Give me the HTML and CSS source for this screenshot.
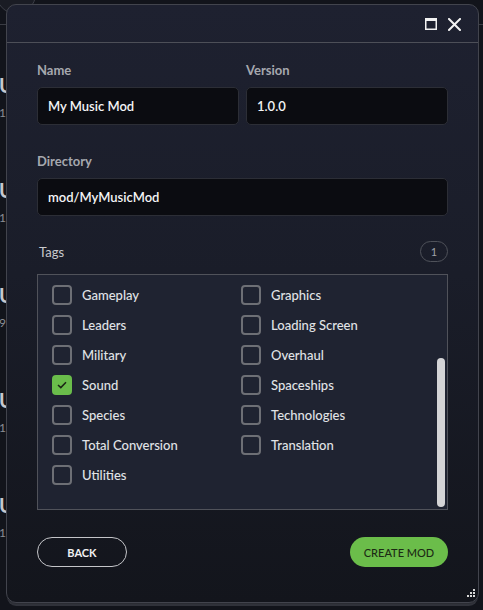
FILE: index.html
```html
<!DOCTYPE html>
<html lang="en">
<head>
<meta charset="utf-8">
<title>New Mod</title>
<link rel="stylesheet" href="styles.css">
</head>
<body>
<div class="page">
  <div class="topbar"><span class="avatar"></span></div>
  <div class="list">
    <div class="item"><div class="item-title">U</div><div class="item-meta">1.4</div></div>
    <div class="item"><div class="item-title">U</div><div class="item-meta">1.0</div></div>
    <div class="item"><div class="item-title">U</div><div class="item-meta">9.1</div></div>
    <div class="item"><div class="item-title">U</div><div class="item-meta">1.2</div></div>
    <div class="item"><div class="item-title">U</div><div class="item-meta">1.0</div></div>
  </div>
</div>

<div class="dialog">
  <div class="dialog-header">
    <span class="hdr-icon" aria-label="Maximize">
      <svg width="12" height="12" viewBox="0 0 12 12"><rect x="0.75" y="0.75" width="10.5" height="10.5" fill="none" stroke="#f2f2f2" stroke-width="1.5"/><rect x="0" y="0" width="12" height="3" fill="#f2f2f2"/></svg>
    </span>
    <span class="hdr-icon" aria-label="Close">
      <svg width="13" height="13" viewBox="0 0 13 13"><path d="M1 1 L12 12 M12 1 L1 12" stroke="#f2f2f2" stroke-width="2" stroke-linecap="square"/></svg>
    </span>
  </div>
  <div class="dialog-body">
    <div class="field-row">
      <div class="field">
        <div class="label">Name</div>
        <div class="input">My Music Mod</div>
      </div>
      <div class="field">
        <div class="label">Version</div>
        <div class="input">1.0.0</div>
      </div>
    </div>
    <div class="field field-dir">
      <div class="label">Directory</div>
      <div class="input">mod/MyMusicMod</div>
    </div>
    <div class="tags-head">
      <span class="tags-label">Tags</span>
      <span class="badge">1</span>
    </div>
    <div class="tags-box">
      <div class="tags-grid">
        <label class="tag"><span class="cb"></span><span>Gameplay</span></label>
        <label class="tag"><span class="cb"></span><span>Graphics</span></label>
        <label class="tag"><span class="cb"></span><span>Leaders</span></label>
        <label class="tag"><span class="cb"></span><span>Loading Screen</span></label>
        <label class="tag"><span class="cb"></span><span>Military</span></label>
        <label class="tag"><span class="cb"></span><span>Overhaul</span></label>
        <label class="tag"><span class="cb cb-on"><svg width="10" height="8" viewBox="0 0 10 8"><path d="M1 4 L3.8 6.6 L9 1.2" fill="none" stroke="#1b2416" stroke-width="1.5"/></svg></span><span>Sound</span></label>
        <label class="tag"><span class="cb"></span><span>Spaceships</span></label>
        <label class="tag"><span class="cb"></span><span>Species</span></label>
        <label class="tag"><span class="cb"></span><span>Technologies</span></label>
        <label class="tag"><span class="cb"></span><span>Total Conversion</span></label>
        <label class="tag"><span class="cb"></span><span>Translation</span></label>
        <label class="tag"><span class="cb"></span><span>Utilities</span></label>
      </div>
      <div class="thumb"></div>
    </div>
    <div class="actions">
      <button class="btn btn-back">BACK</button>
      <button class="btn btn-create">CREATE MOD</button>
    </div>
  </div>
  <span class="resize">
    <svg width="10" height="10" viewBox="0 0 10 10" fill="#d8d8d8"><rect x="7" y="0" width="2" height="2"/><rect x="4" y="3" width="2" height="2"/><rect x="7" y="3" width="2" height="2"/><rect x="1" y="6" width="2" height="2"/><rect x="4" y="6" width="2" height="2"/><rect x="7" y="6" width="2" height="2"/></svg>
  </span>
</div>
</body>
</html>
```
FILE: styles.css
```css
* { box-sizing: border-box; }
html, body { margin: 0; padding: 0; }
body {
  width: 483px;
  height: 610px;
  overflow: hidden;
  background: #12141b;
  font-family: Lato, "Noto Sans", sans-serif;
  color: #e4e5e8;
  position: relative;
}

/* background page */
.topbar {
  height: 25px;
  border-bottom: 1px solid #3a3c44;
  overflow: hidden;
}
.avatar {
  display: block;
  width: 40px;
  height: 40px;
  margin: -26px 0 0 -4px;
  border: 1px solid #3d3f48;
  border-radius: 50%;
  background: #1a1c24;
}
.list { padding-top: 48px; }
.item {
  height: 105px;
  margin-left: -1px;
}
.item-title {
  font-size: 20px;
  line-height: 24px;
  font-weight: 700;
  color: #c6c8ce;
}
.item-meta {
  margin-top: 8px;
  font-size: 12px;
  line-height: 16px;
  color: #8b8d94;
}

/* dialog */
.dialog {
  position: absolute;
  left: 6px;
  top: 4px;
  width: 473px;
  height: 599px;
  border: 1px solid #42444d;
  border-radius: 10px;
  background: linear-gradient(180deg, #1e2130 0%, #1a1d29 45%, #13151c 100%);
  box-shadow: 0 2px 0 -1px #2a2c33, 0 4px 0 -1px #30323a;
  overflow: hidden;
}
.dialog-header {
  height: 38px;
  border-bottom: 1px solid #4d4f58;
  display: flex;
  align-items: center;
  justify-content: flex-end;
  gap: 11px;
  padding: 1px 17px 0 0;
}
.hdr-icon { display: flex; }

.dialog-body {
  padding: 19px 30px 0 30px;
}
.field-row {
  display: flex;
  gap: 7px;
}
.field-row .field { flex: 1; }
.label {
  font-size: 13px;
  line-height: 16px;
  font-weight: 700;
  color: #a6a8ae;
  margin-bottom: 9px;
}
.input {
  height: 38px;
  background: #0b0c11;
  border: 1px solid #2c2e36;
  border-radius: 5px;
  padding: 0 10px;
  display: flex;
  align-items: center;
  font-size: 13px;
  font-weight: 600;
  color: #f4f4f6;
}
.field-dir { margin-top: 28px; }

.tags-head {
  margin-top: 25px;
  height: 21px;
  display: flex;
  align-items: center;
  justify-content: space-between;
  padding-left: 2px;
}
.tags-label {
  font-size: 13px;
  color: #c9cace;
}
.badge {
  width: 28px;
  height: 21px;
  border: 1px solid #4f525a;
  border-radius: 11px;
  display: flex;
  align-items: center;
  justify-content: center;
  font-size: 11px;
  color: #9fa1a7;
}

.tags-box {
  position: relative;
  margin-top: 12px;
  height: 236px;
  border: 1px solid #50525a;
  background: #1f2331;
  padding: 5px 0 0 14px;
}
.tags-grid {
  display: grid;
  grid-template-columns: 189px 189px;
  grid-auto-rows: 30px;
}
.tag {
  display: flex;
  align-items: center;
  gap: 10px;
  font-size: 13px;
  font-weight: 500;
  color: #e1e3e7;
}
.cb {
  width: 20px;
  height: 20px;
  border: 2px solid #6d6f75;
  border-radius: 4px;
  flex: none;
  display: flex;
  align-items: center;
  justify-content: center;
}
.cb-on {
  background: #6abd4b;
  border-color: #6abd4b;
}
.thumb {
  position: absolute;
  right: 2px;
  top: 83px;
  width: 8px;
  height: 149px;
  border-radius: 4px;
  background: #d4d4d6;
}

.actions {
  margin-top: 27px;
  display: flex;
  justify-content: space-between;
}
.btn {
  height: 30px;
  border-radius: 15px;
  font-family: Lato, "Noto Sans", sans-serif;
  font-size: 11px;
  font-weight: 700;
  padding: 0;
  cursor: pointer;
}
.btn-back {
  width: 90px;
  background: transparent;
  border: 1px solid #c4c5c9;
  color: #f0f0f2;
}
.btn-create {
  width: 98px;
  background: #6bbd4a;
  border: none;
  color: #1c2a14;
  font-weight: 500;
}
.resize {
  position: absolute;
  right: 2px;
  bottom: 3px;
  display: flex;
}
```
